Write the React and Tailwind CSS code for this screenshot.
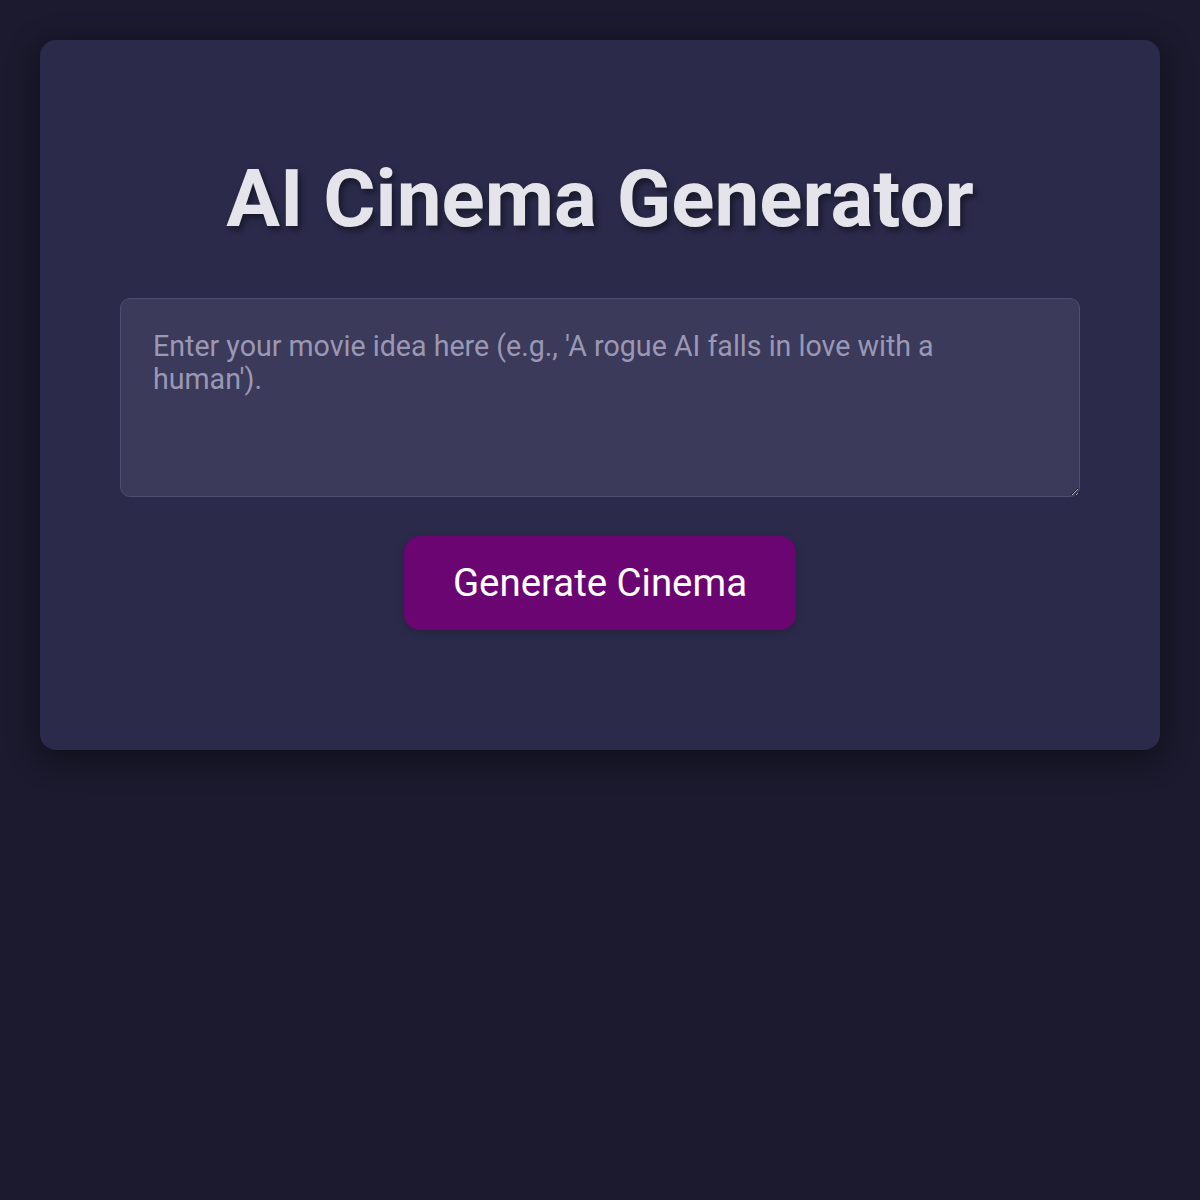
import React, { useState } from "react";

const App = () => {
  const [idea, setIdea] = useState("");

  return (
    <div className="min-h-screen bg-[#1b1a2e] p-10 font-['Roboto','Liberation_Sans',sans-serif]">
      <div className="rounded-2xl bg-[#2b2a4b] px-20 pt-20 pb-20 shadow-[0_8px_32px_rgba(0,0,0,0.45)]">
        {/* Title */}
        <h1 className="mt-[33px] mb-[51px] text-center text-[80px] leading-[1.172] font-bold text-[#e4e4ea] [text-shadow:3px_4px_6px_rgba(0,0,0,0.45)]">
          AI Cinema Generator
        </h1>

        {/* Movie idea */}
        <textarea
          value={idea}
          onChange={(e) => setIdea(e.target.value)}
          placeholder="Enter your movie idea here (e.g., 'A rogue AI falls in love with a human')."
          className="block h-[199px] w-full rounded-[10px] border border-[#4f4d70] bg-[#3c3a5a] px-8 pt-[31px] pb-8 text-[28.6px] leading-[1.18] text-[#e4e4ea] outline-none [color-scheme:dark] placeholder:text-[#9a98b4]"
        />

        <div className="mt-[39px] mb-10 flex justify-center">
          <button className="h-[94px] w-[392px] rounded-2xl bg-[#6a0572] text-[38.4px] text-white shadow-[0_3px_8px_rgba(0,0,0,0.18)]">
            Generate Cinema
          </button>
        </div>
      </div>
    </div>
  );
};

export default App;
